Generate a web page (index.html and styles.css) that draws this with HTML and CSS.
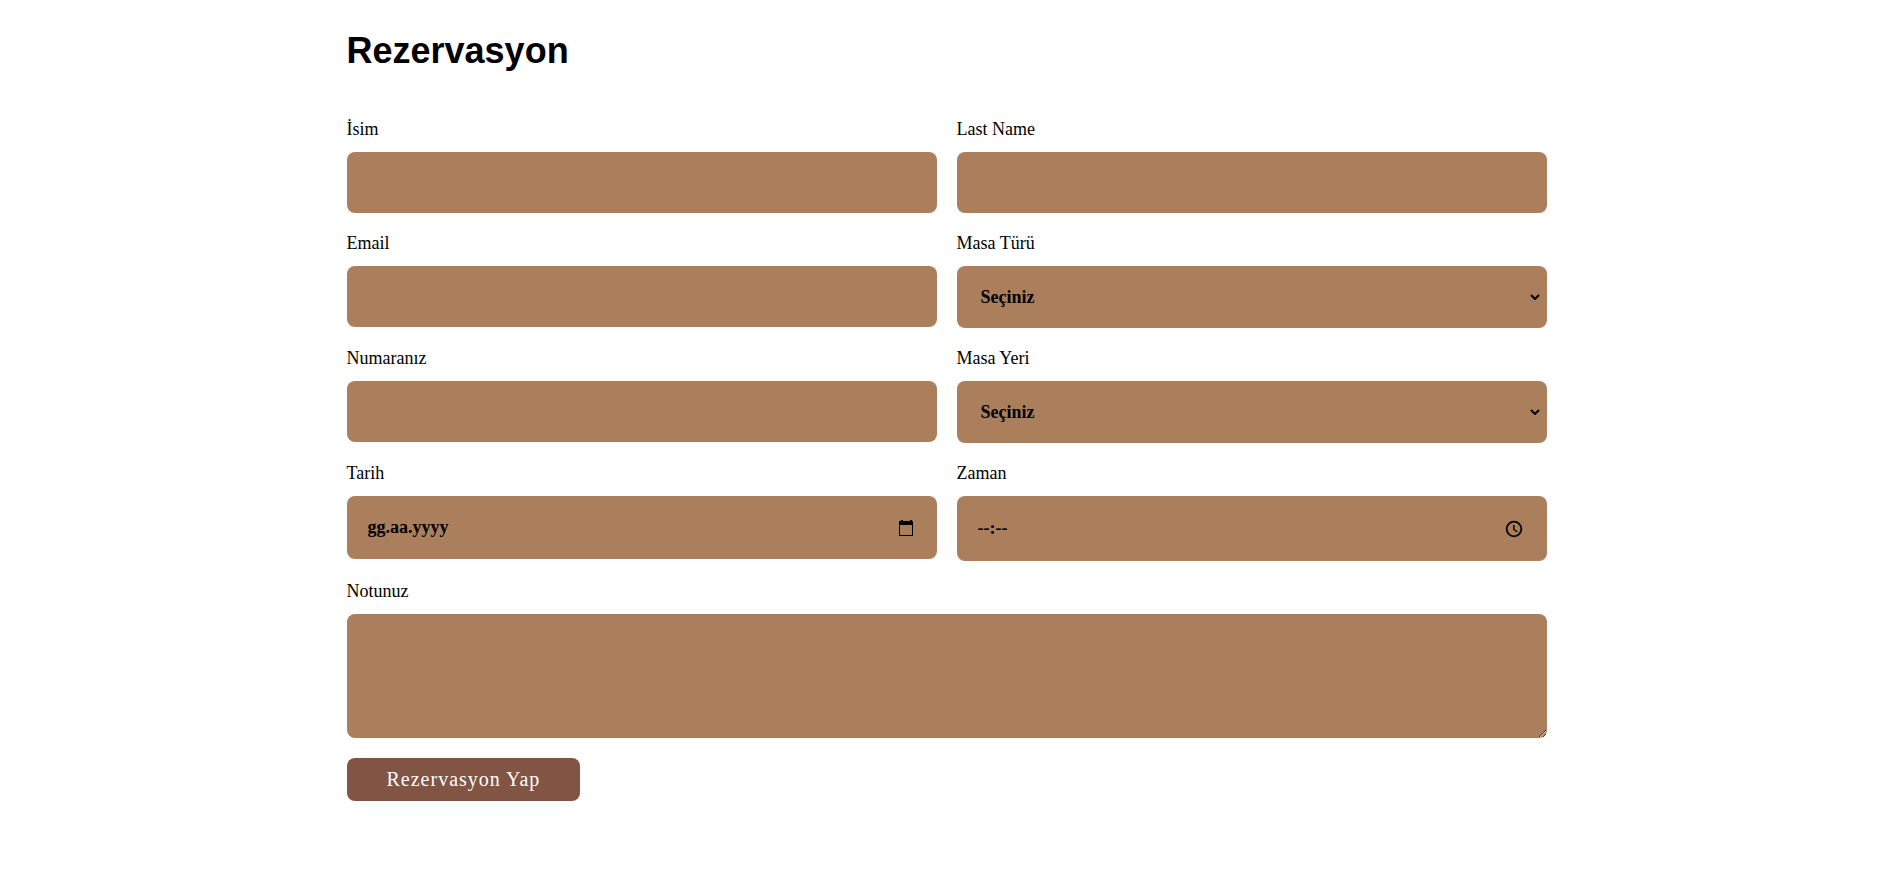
FILE: index.html
```html
<!DOCTYPE html>
<html lang="tr">
<head>
<meta charset="utf-8">
<title>Rezervasyon</title>
<link rel="stylesheet" href="styles.css">
</head>
<body>
<main class="reservation">
  <h1 class="title">Rezervasyon</h1>
  <form class="form">
    <div class="field"><label for="name">İsim</label><input class="control" id="name" type="text"></div>
    <div class="field"><label for="surname">Last Name</label><input class="control" id="surname" type="text"></div>
    <div class="field"><label for="email">Email</label><input class="control" id="email" type="email"></div>
    <div class="field">
      <label for="table-type">Masa Türü</label>
      <div class="picker">
        <select class="control select" id="table-type"><option>Seçiniz</option></select>
        <svg class="arrow" viewBox="0 0 10 6"><path d="M1 1l4 4 4-4"/></svg>
      </div>
    </div>
    <div class="field"><label for="phone">Numaranız</label><input class="control" id="phone" type="tel"></div>
    <div class="field">
      <label for="table-place">Masa Yeri</label>
      <div class="picker">
        <select class="control select" id="table-place"><option>Seçiniz</option></select>
        <svg class="arrow" viewBox="0 0 10 6"><path d="M1 1l4 4 4-4"/></svg>
      </div>
    </div>
    <div class="field">
      <label for="date">Tarih</label>
      <div class="picker">
        <input class="control date" id="date" type="text" placeholder="gg.aa.yyyy">
        <button class="picker-button" type="button" aria-label="Tarih">
          <svg class="icon" viewBox="0 0 18 18"><path d="M16 2h-1V1h-2v1H6V1H4v1H2v15h14zm-1 14H3V6h12z"/></svg>
        </button>
      </div>
    </div>
    <div class="field">
      <label for="time">Zaman</label>
      <div class="picker">
        <input class="control time" id="time" type="text" placeholder="--:--">
        <button class="picker-button" type="button" aria-label="Zaman">
          <svg class="icon" viewBox="0 0 24 24"><path d="M12 1a11 11 0 1 0 0 22 11 11 0 0 0 0-22zm0 19.600a8.600 8.600 0 1 1 0-17.200 8.600 8.600 0 0 1 0 17.200zM12.800 6.500h-2v6.600l5.200 3.400 1-1.600-4.200-2.600z"/></svg>
        </button>
      </div>
    </div>
    <div class="field wide"><label for="note">Notunuz</label><textarea class="control note" id="note"></textarea></div>
    <button class="submit" type="submit">Rezervasyon Yap</button>
  </form>
</main>
</body>
</html>
```
FILE: styles.css
```css
* { box-sizing: border-box; }
body {
  margin: 0 0 0 8px;
  background: #fff;
  color: #000;
  font: 18px/20px "Liberation Serif", "Times New Roman", serif;
}
.reservation { max-width: 1200px; margin: 0 auto; padding: 30px 0; }
.title {
  margin: 0 0 48px;
  font: bold 36px/41px "Liberation Sans", Arial, sans-serif;
}
.form {
  display: grid;
  grid-template-columns: 1fr 1fr;
  gap: 20px;
  align-items: start;
}
.field { display: flex; flex-direction: column; gap: 13px; }
.wide { grid-column: 1 / -1; }
.control {
  width: 100%;
  height: 61px;
  margin: 0;
  padding: 20px;
  border: 0;
  border-radius: 8px;
  background-color: #ab7f5c;
  color: #000;
  font: bold 18px/21px "Liberation Serif", "Times New Roman", serif;
}
.control::placeholder { color: #000; opacity: 1; }
.picker { display: grid; align-items: center; }
.picker > * { grid-area: 1 / 1; }
.select { height: 62px; padding-left: 24px; appearance: none; }
.arrow {
  justify-self: end;
  width: 10px;
  height: 6px;
  margin-right: 7px;
  fill: none;
  stroke: #000;
  stroke-width: 2;
  pointer-events: none;
}
.date { height: 63px; padding-left: 21px; }
.time { height: 65px; padding-left: 21px; }
.picker-button {
  justify-self: end;
  display: flex;
  margin: 0 22px 0 0;
  padding: 0;
  border: 0;
  background: none;
}
.time + .picker-button { margin-right: 24px; }
.icon { width: 18px; height: 18px; fill: #000; }
.note { height: 124px; resize: both; }
.submit {
  justify-self: start;
  padding: 10px 40px;
  border: 0;
  border-radius: 8px;
  background: #815443;
  color: #fff;
  font: 20px/23px "Liberation Serif", "Times New Roman", serif;
  letter-spacing: 1px;
}
```
